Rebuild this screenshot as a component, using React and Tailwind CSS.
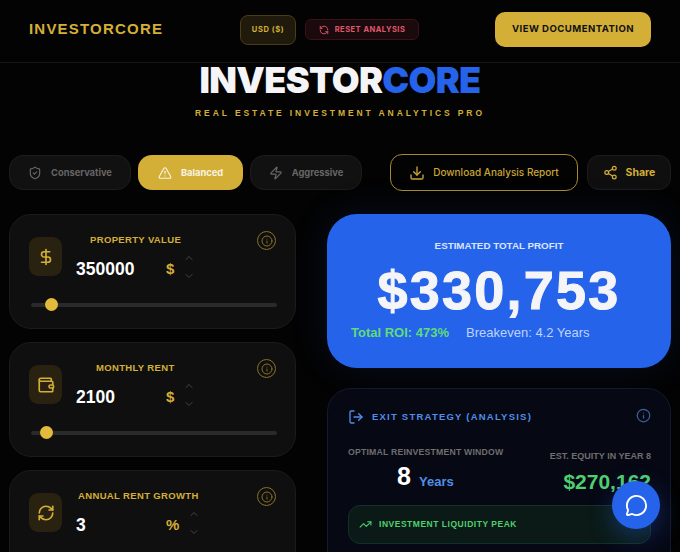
import React from 'react';
import {
  ShieldCheck, TriangleAlert, Zap, Download, Share2, DollarSign, Wallet, RefreshCw, RefreshCcw,
  ChevronUp, ChevronDown, Info, LogOut, TrendingUp, MessageCircle,
} from 'lucide-react';

const helv = "font-['Liberation_Sans',Arial,sans-serif]";
const inter = "font-['Inter',sans-serif]";

function Mode({ icon: Icon, label, active, width }) {
  return (
    <div className={`${width} h-[35px] rounded-[14px] flex items-center justify-center gap-[9px] text-[9.3px] font-bold ${inter} ${active ? 'bg-[#d4af37] text-[#f8f4e3]' : 'bg-[#111111] border border-[#1c1c1c] text-[#666666]'}`}>
      <Icon size={14} strokeWidth={2} />
      <span>{label}</span>
    </div>
  );
}

function InputCard({ icon: Icon, label, labelClass, value, unit, unitClass, spin, thumb }) {
  return (
    <div className="relative shrink-0 h-[115px] rounded-[22px] bg-[#0f0f0f] border border-[#1b1b1b]">
      <div className="absolute left-[19px] top-[22px] w-[33px] h-[39px] rounded-[9px] bg-[#2a2210] flex items-center justify-center text-[#d4af37]">
        <Icon size={18} strokeWidth={2.2} />
      </div>
      <div className={`absolute top-[18px] text-[9.5px] font-bold tracking-[0.35px] text-[#d4af37] whitespace-nowrap ${labelClass} ${helv}`}>{label}</div>
      <div className={`absolute left-[66px] top-[43px] text-[17.5px] leading-[22px] font-bold text-white ${helv}`}>{value}</div>
      <div className={`absolute top-[45px] text-[15px] leading-[18px] font-bold text-[#d4af37] ${unitClass} ${helv}`}>{unit}</div>
      <div className={`absolute top-[37px] flex flex-col gap-[6px] text-[#454545] ${spin}`}>
        <ChevronUp size={12} strokeWidth={2} />
        <ChevronDown size={12} strokeWidth={2} />
      </div>
      <div className="absolute right-[19px] top-[16px] w-[19px] h-[19px] rounded-full border border-[#8a7228] flex items-center justify-center">
        <Info size={12} strokeWidth={2} className="text-[#8a7228]" />
      </div>
      {thumb && (
        <div className="absolute left-[21px] right-[18px] top-[88px] h-[4px] rounded-full bg-[#2a2a2a]">
          <div className={`absolute top-[-5px] w-[13px] h-[13px] rounded-full bg-[#e2bb3a] ${thumb}`} />
        </div>
      )}
    </div>
  );
}

export default function App() {
  return (
    <div className={`relative w-[680px] h-[552px] overflow-hidden bg-[#030303] ${inter}`}>
      <header className="h-[63px] border-b border-[#161616] flex items-center pl-[29px] pr-[29px] pb-[3px]">
        <div className={`w-[211px] text-[15px] font-bold tracking-[1.2px] text-[#d4af37] ${helv}`}>INVESTORCORE</div>
        <div className="h-[30px] w-[56px] rounded-[8px] bg-[#1f1a0b] border border-[#4a3d16] flex items-center justify-center text-[7.5px] font-bold tracking-[0.6px] text-[#d4af37]">USD ($)</div>
        <div className="ml-[9px] h-[21px] w-[114px] rounded-[6px] bg-[#1a0a0d] border border-[#3a1218] flex items-center justify-center gap-[6px] text-[7.5px] font-bold tracking-[0.5px] text-[#e0596b]">
          <RefreshCcw size={10} strokeWidth={2.2} />
          <span>RESET ANALYSIS</span>
        </div>
        <div className="ml-auto h-[35px] w-[156px] rounded-[10px] bg-[#d4af37] flex items-center justify-center text-[9.6px] font-bold tracking-[0.45px] text-[#111111]">VIEW DOCUMENTATION</div>
      </header>

      <div className="flex flex-col items-center">
        <h1 className="h-[34px] text-[36px] leading-[34px] font-black tracking-[-0.7px] text-[#f5f5f7]">INVESTOR<span className="text-[#2563eb]">CORE</span></h1>
        <p className={`mt-[10px] text-[8.5px] leading-[12px] font-bold tracking-[2.9px] text-[#d4af37] ${helv}`}>REAL ESTATE INVESTMENT ANALYTICS PRO</p>
      </div>

      <div className="mt-[35px] px-[9px] flex items-center">
        <div className="flex gap-[7px]">
          <Mode icon={ShieldCheck} label="Conservative" width="w-[122px]" />
          <Mode icon={TriangleAlert} label="Balanced" width="w-[105px]" active />
          <Mode icon={Zap} label="Aggressive" width="w-[112px]" />
        </div>
        <div className="ml-[28px] h-[37px] w-[188px] rounded-[12px] border border-[#a68a2c] flex items-center justify-center gap-[8px] text-[10px] font-medium text-[#c9a635]">
          <Download size={16} strokeWidth={2} />
          <span>Download Analysis Report</span>
        </div>
        <div className="ml-[9px] h-[35px] w-[84px] rounded-[12px] bg-[#0f0f0f] border border-[#1c1c1c] flex items-center justify-center gap-[8px] text-[10.5px] font-bold text-[#d4af37]">
          <Share2 size={15} strokeWidth={2} />
          <span>Share</span>
        </div>
      </div>

      <div className="mt-[23px] px-[9px] flex gap-[31px]">
        <div className="w-[287px] flex flex-col gap-[13px]">
          <InputCard icon={DollarSign} label="PROPERTY VALUE" labelClass="left-[80px]" value="350000" unit="$" unitClass="left-[156px]" spin="left-[173px]" thumb="left-[14px]" />
          <InputCard icon={Wallet} label="MONTHLY RENT" labelClass="left-[86px]" value="2100" unit="$" unitClass="left-[156px]" spin="left-[173px]" thumb="left-[9px]" />
          <InputCard icon={RefreshCw} label="ANNUAL RENT GROWTH" labelClass="left-[68px]" value="3" unit="%" unitClass="left-[156px]" spin="left-[178px]" />
        </div>

        <div className="w-[344px] flex flex-col gap-[20px]">
          <div className={`h-[154px] rounded-[30px] bg-[#2563eb] shadow-[0_0_40px_rgba(37,99,235,0.12)] flex flex-col items-center ${helv}`}>
            <div className="mt-[26px] text-[9.8px] leading-[12px] font-bold text-[#dbe6fd]">ESTIMATED TOTAL PROFIT</div>
            <div className="mt-[11px] text-[54px] leading-[54px] font-bold tracking-[2.2px] [-webkit-text-stroke:1px_#f5f5f7] text-[#f5f5f7]">$330,753</div>
            <div className="mt-[8px] w-full pl-[24px] flex gap-[17px] text-[13px] leading-[16px]">
              <span className="font-bold text-[#5fdc78]">Total ROI: 473%</span>
              <span className="text-[#bfd3fb]">Breakeven: 4.2 Years</span>
            </div>
          </div>

          <div className={`relative h-[200px] rounded-[24px] bg-[#060814] border border-[#131a2e] ${helv}`}>
            <div className="absolute left-[20px] top-[20px] flex items-center gap-[8px] text-[#4f8fe8]">
              <LogOut size={16} strokeWidth={2} />
              <span className="text-[9.5px] font-bold tracking-[1.22px]">EXIT STRATEGY (ANALYSIS)</span>
            </div>
            <Info size={15} strokeWidth={2} className="absolute right-[19px] top-[19px] text-[#3e5f9a]" />
            <div className="absolute left-[20px] top-[57px] text-[8.7px] font-bold tracking-[0.2px] text-[#6e6e6e]">OPTIMAL REINVESTMENT WINDOW</div>
            <div className="absolute left-[69px] top-[73px] text-[25px] leading-[29px] font-bold text-white">8</div>
            <div className="absolute left-[91px] top-[85px] text-[13px] leading-[16px] font-bold text-[#4f8fe8]">Years</div>
            <div className="absolute right-[19px] top-[61px] text-[9px] font-bold text-[#6e6e6e]">EST. EQUITY IN YEAR 8</div>
            <div className="absolute right-[19px] top-[80px] text-[21px] leading-[26px] font-bold text-[#4fcf70]">$270,162</div>
            <div className="absolute left-[20px] right-[19px] top-[116px] h-[39px] rounded-[12px] bg-[#0b1a16] border border-[#12302a] pl-[10px] flex items-center gap-[7px] text-[#4fcf70]">
              <TrendingUp size={13} strokeWidth={2} />
              <span className="text-[8.5px] font-bold tracking-[0.52px]">INVESTMENT LIQUIDITY PEAK</span>
            </div>
          </div>
        </div>
      </div>

      <div className="absolute left-[612px] top-[481px] w-[48px] h-[48px] rounded-full bg-[#2563eb] shadow-[0_8px_24px_rgba(37,99,235,0.35)] flex items-center justify-center text-white">
        <MessageCircle size={23} strokeWidth={2} />
      </div>
    </div>
  );
}
